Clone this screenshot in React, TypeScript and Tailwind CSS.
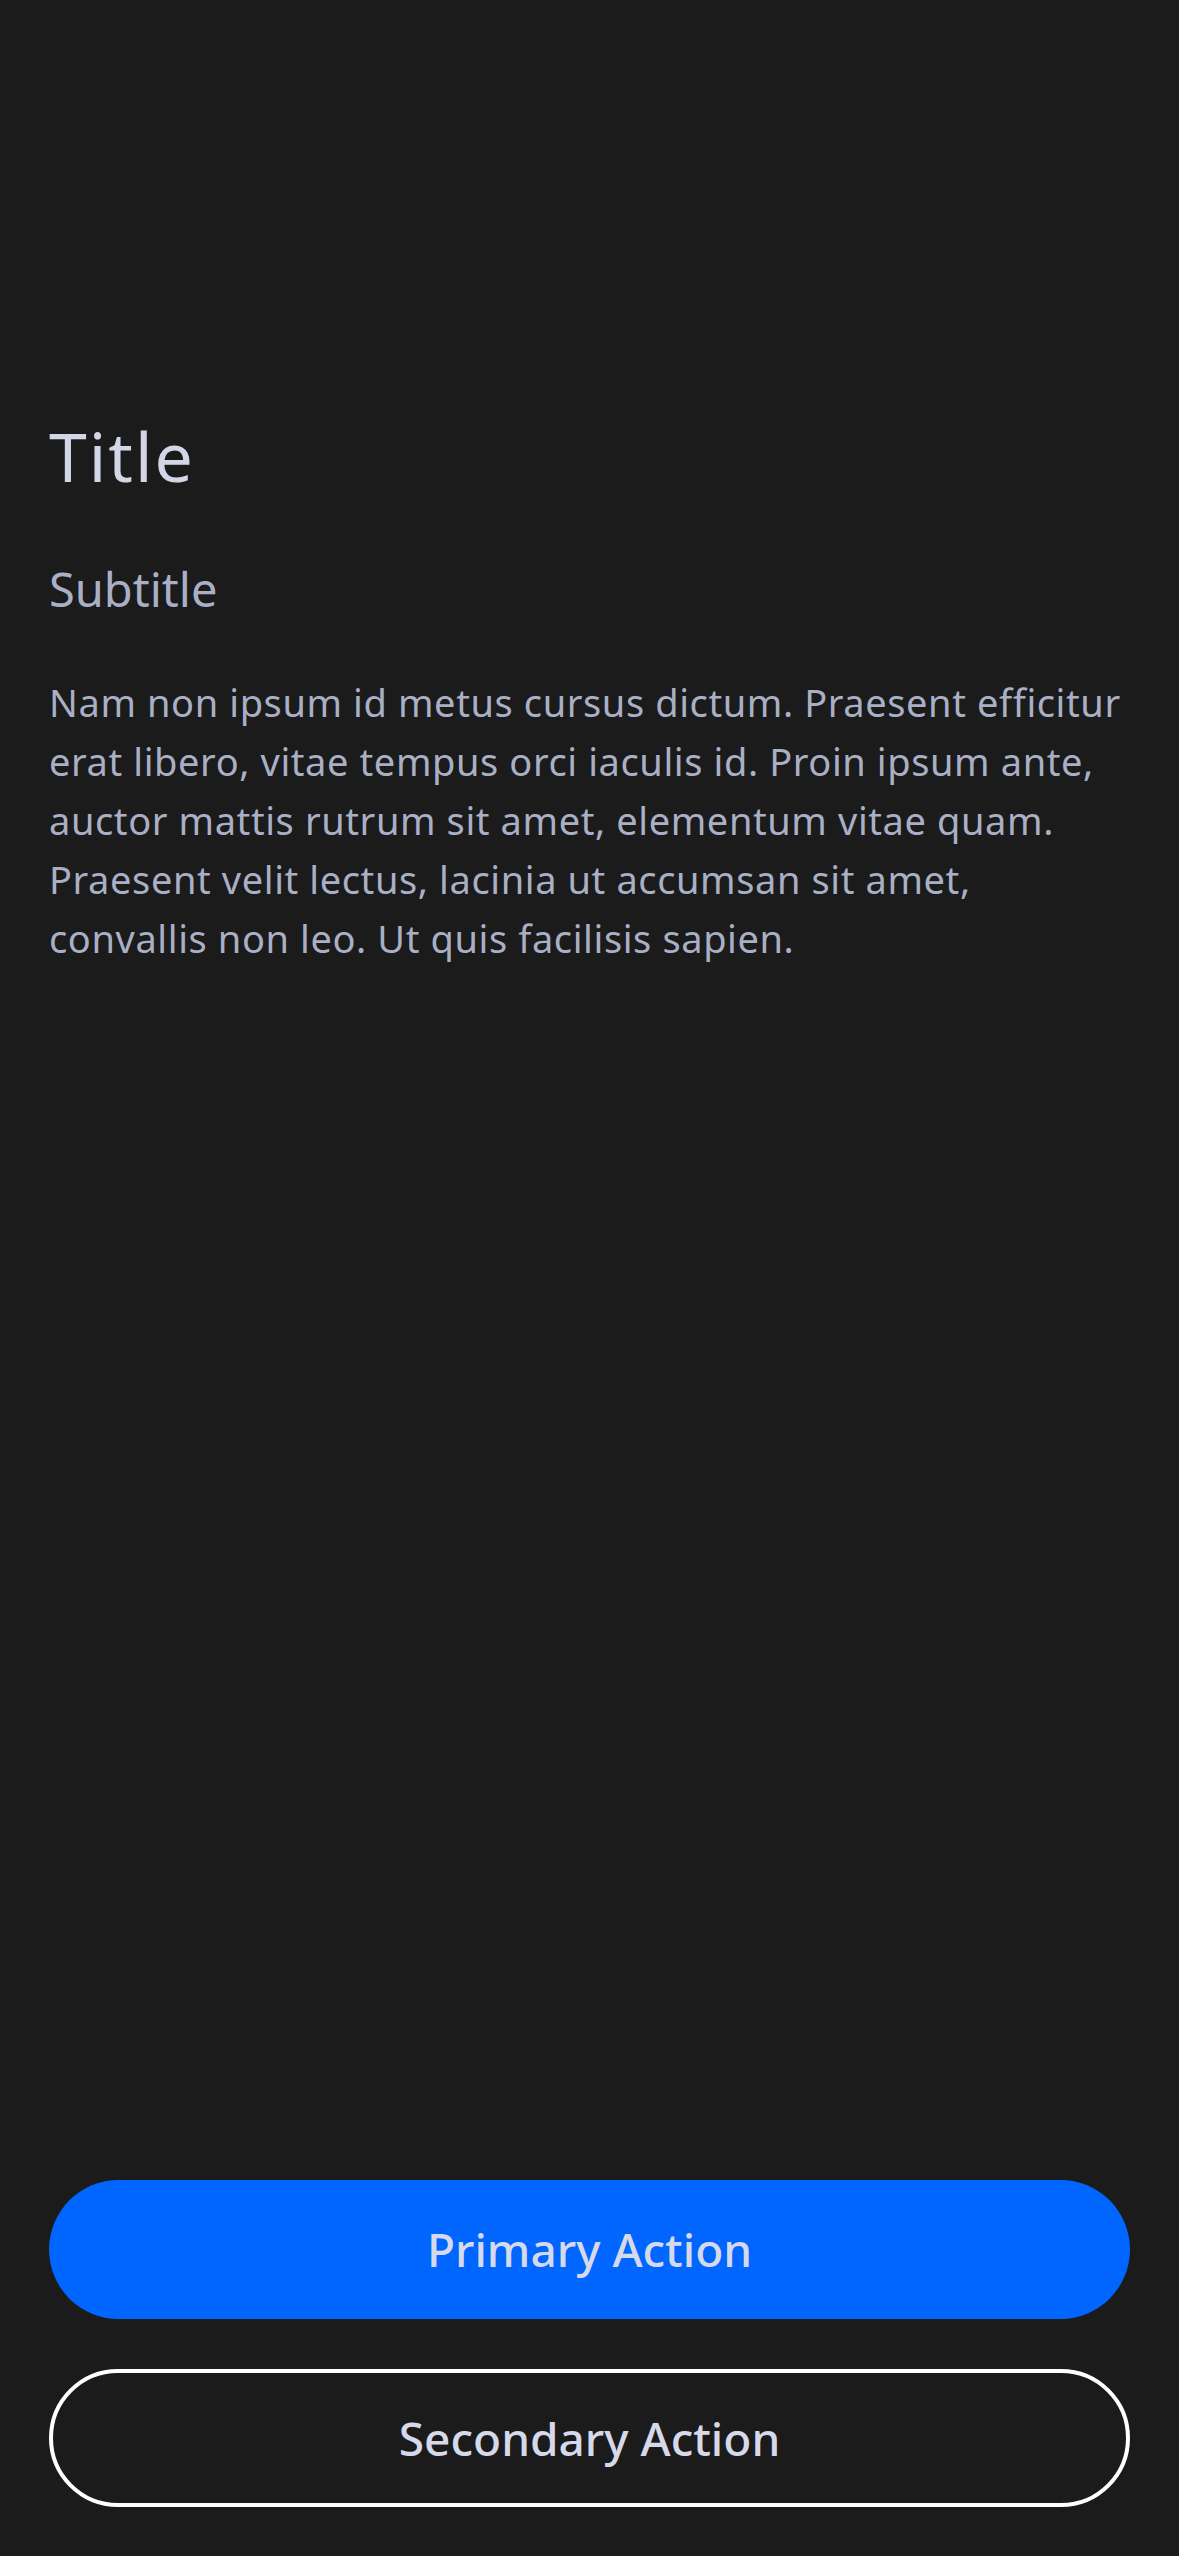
import React from "react";

const font = { fontFamily: '"Noto Sans", "Open Sans", sans-serif' };

export default function App() {
  return (
    <div
      className="min-h-[2556px] w-full bg-[#1b1b1b] flex flex-col px-[49px] pt-[415px] pb-[49px]"
      style={font}
    >
      {/* Content */}
      <div className="flex flex-col">
        <h1 className="text-[68px] leading-[82px] font-normal tracking-[2px] text-[#d2d6e6]">Title</h1>
        <h2 className="mt-[63px] text-[47px] leading-[59px] font-normal text-[#a9b0c6]">Subtitle</h2>
        <p className="mt-[54px] text-[38px] leading-[59px] tracking-[0.6px] text-[#a9b0c6]">
          Nam non ipsum id metus cursus dictum. Praesent efficitur erat libero, vitae tempus orci iaculis id. Proin
          ipsum ante, auctor mattis rutrum sit amet, elementum vitae quam. Praesent velit lectus, lacinia ut accumsan
          sit amet, convallis non leo. Ut quis facilisis sapien.
        </p>
      </div>

      <div className="flex-1" />

      {/* Actions */}
      <div className="flex flex-col gap-[50px]">
        <button className="h-[139px] w-full rounded-full bg-[#0066ff] text-[46px] font-medium text-[#d5d9ea]">
          Primary Action
        </button>
        <button className="h-[138px] w-full rounded-full border-4 border-white bg-transparent text-[46px] font-medium text-[#d5d9ea]">
          Secondary Action
        </button>
      </div>
    </div>
  );
}
